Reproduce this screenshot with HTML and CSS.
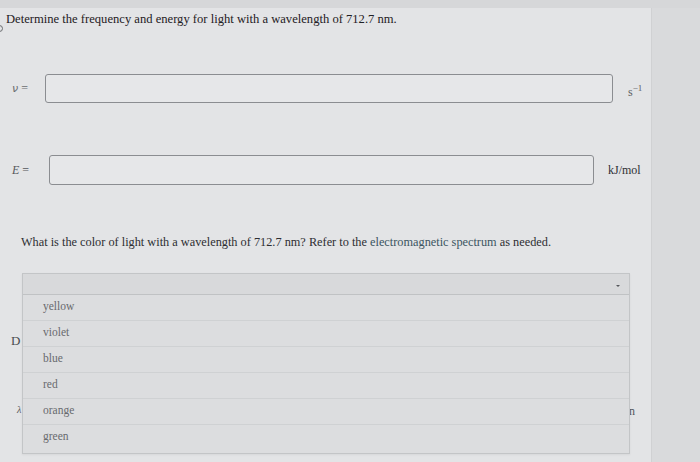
FILE: index.html
```html
<!DOCTYPE html>
<html lang="en">

<head>
    <meta charset="UTF-8">
    <meta name="viewport" content="width=device-width, initial-scale=1.0">
    <title>Frequency and energy</title>
    <link rel="stylesheet" href="styles.css">
</head>

<body>
    <div id='topbar'></div>
    <section id='main'>
        <div id='panel'>
            <span class='edge-dot'></span>
            <p class='title'>Determine the frequency and energy for light with a wavelength of 712.7 nm.</p>

            <div class='answer-row row-nu'>
                <span class='label'><i class='nu'>ν</i> =</span>
                <span class='answer-box'></span>
                <span class='unit'>s<sup>−1</sup></span>
            </div>
            <div class='answer-row row-e'>
                <span class='label'><i>E</i> =</span>
                <span class='answer-box'></span>
                <span class='unit'>kJ/mol</span>
            </div>

            <p class='question'>What is the color of light with a wavelength of 712.7 nm? Refer to the
                <span class='link'>electromagnetic spectrum</span> as needed.</p>

            <div class='behind'>
                <p class='behind-text'>D</p>
                <p class='behind-lambda'><i>λ</i> <span class='behind-nm'>n</span></p>
            </div>

            <!-- open select menu, lies over the part below -->
            <div class='dropdown'>
                <div class='dropdown-head'><span class='caret'></span></div>
                <ul class='options'>
                    <li>yellow</li>
                    <li>violet</li>
                    <li>blue</li>
                    <li>red</li>
                    <li>orange</li>
                    <li>green</li>
                </ul>
            </div>
        </div>
        <div id='side'></div>
    </section>
</body>

</html>
```

FILE: styles.css
```css
* {
    margin: 0;
    padding: 0;
    box-sizing: border-box;
}

html,
body {
    height: 100%;
    overflow: hidden;
}

body {
    background: #dadbdd;
    font-family: "Liberation Serif", "Times New Roman", serif;
    color: #2b2c2f;
}

#topbar {
    height: 8px;
    background: #d6d7d9;
}

#main {
    display: flex;
    height: calc(100% - 8px);
}

#panel {
    position: relative;
    width: 652px;
    background: #e3e4e6;
    border-right: 1px solid #d0d1d3;
}

#side {
    flex: 1;
    background: #d9dadc;
}

.edge-dot {
    position: absolute;
    left: -4px;
    top: 17px;
    width: 7px;
    height: 7px;
    border: 1px solid #6a6c70;
    border-radius: 50%;
}

.title {
    padding: 3px 0 0 6px;
    font-size: 12.6px;
    line-height: 16px;
    color: #1f2024;
}

.answer-row {
    display: flex;
    align-items: center;
}

.row-nu {
    margin-top: 47px;
}

.row-e {
    margin-top: 52px;
}

.label {
    font-size: 11px;
    color: #6b6d71;
    padding-left: 12px;
}

.label .nu {
    font-family: "DejaVu Sans", sans-serif;
    font-size: 11px;
}

.row-nu .label {
    width: 45px;
    font-size: 12px;
}

.row-e .label {
    width: 49px;
    font-size: 12px;
    color: #55575b;
}

.answer-box {
    display: block;
    border: 1.5px solid #8b8d91;
    border-radius: 3px;
    background: #e6e7e9;
}

.row-nu .answer-box {
    width: 568px;
    height: 29px;
}

.row-e .answer-box {
    width: 545px;
    height: 30px;
}

.unit {
    font-size: 12px;
    color: #45474b;
}

.row-nu .unit {
    padding: 6px 0 0 15px;
    font-size: 12px;
    color: #5d5f63;
}

.row-e .unit {
    padding-left: 14px;
    color: #2f3034;
}

.unit sup {
    font-size: 9px;
}

.question {
    margin: 50px 0 0 21px;
    font-size: 12.3px;
    line-height: 15px;
    color: #2d2e32;
}

.link {
    color: #3b5461;
}

.behind {
    padding-top: 83px;
}

/* only the part left of the open menu shows */
.behind-text {
    padding-left: 11px;
    font-size: 13px;
    line-height: 16px;
    color: #4a4c50;
}

.behind-lambda {
    display: flex;
    justify-content: space-between;
    margin-top: 55px;
    padding: 0 16px 0 17px;
    font-size: 10px;
    color: #55575b;
}

.behind-nm {
    font-size: 12px;
}

.dropdown {
    position: absolute;
    left: 22px;
    top: 265px;
    width: 608px;
    border: 1px solid #c3c5c7;
    background: #dcdddf;
    box-shadow: 0 1px 2px rgba(0, 0, 0, 0.06);
}

.dropdown-head {
    position: relative;
    height: 21px;
    background: #d8d9db;
    border-bottom: 1px solid #c0c2c4;
}

.caret {
    position: absolute;
    right: 9px;
    top: 11px;
    width: 0;
    height: 0;
    border-left: 2px solid transparent;
    border-right: 2px solid transparent;
    border-top: 2px solid #55575b;
}

.options {
    list-style: none;
}

.options > li {
    height: 26px;
    padding: 4px 0 0 20px;
    font-size: 11.5px;
    line-height: 15px;
    color: #686a6e;
    border-bottom: 1px solid #cfd1d3;
}

.options > li:last-child {
    height: 28px;
    border-bottom: none;
}
```
